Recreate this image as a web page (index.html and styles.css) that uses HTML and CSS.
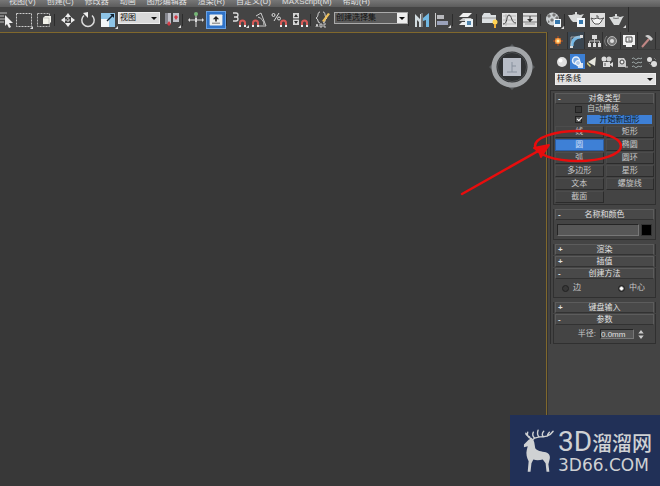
FILE: index.html
```html
<!DOCTYPE html>
<html lang="zh-CN">
<head>
<meta charset="utf-8">
<title>3ds Max</title>
<link rel="stylesheet" href="styles.css">
</head>
<body>
<div class="app">
  <nav class="menubar">
    <a href="#">视图(V)</a><a href="#">创建(C)</a><a href="#">修改器</a><a href="#">动画</a><a href="#">图形编辑器</a><a href="#">渲染(R)</a><a href="#">自定义(U)</a><a href="#">MAXScript(M)</a><a href="#">帮助(H)</a>
  </nav>

  <header class="toolbar">
    <button class="tool tool-first" aria-label="按名称选择"><svg viewBox="0 0 20 20"><path d="M5 3h8M5 6h5M5 9h6M5 12h5" stroke="#bbb"/><path d="M11 5v11l2-2 2 4 2-1-2-4h4z" fill="#eee"/></svg></button>
    <button class="tool" aria-label="矩形选择区域"><svg viewBox="0 0 20 20"><rect x="2.500" y="3.500" width="15" height="13" fill="none" stroke="#ccc" stroke-dasharray="2 1"/><path d="M19 16v3h-3z" fill="#ddd"/></svg></button>
    <button class="tool" aria-label="窗口/交叉"><svg viewBox="0 0 20 20"><rect x="3.500" y="3.500" width="12" height="13" fill="none" stroke="#bbb" stroke-dasharray="2 1"/><path d="M9 8l2-2h6v6l-2 2H9z" fill="#f2f2ea"/><path d="M15 14V8H9" stroke="#aaa" fill="none" stroke-width=".6"/></svg></button>
    <span class="sep"></span>
    <button class="tool" aria-label="选择并移动"><svg viewBox="0 0 20 20"><path d="M10 3l3 4H7zM10 17l3-4H7zM3 10l4-3v6zM17 10l-4-3v6z" fill="#eee"/><path d="M10 7v6M7 10h6" stroke="#ddd" stroke-dasharray="2 1"/></svg></button>
    <button class="tool" aria-label="选择并旋转"><svg viewBox="0 0 20 20"><path d="M6 5.500a6.200 6.200 0 1 0 8 0" fill="none" stroke="#ddd" stroke-width="1.500"/><path d="M5 3l5-1v6z" fill="#eee"/></svg></button>
    <button class="tool" aria-label="选择并缩放"><svg viewBox="0 0 20 20"><path d="M3 3h14v14H3z" fill="#8ec4e6"/><path d="M3 9h8v8H3z" fill="#f2f6f8"/><path d="M9 11l6-6" stroke="#123" stroke-width="1.500"/><path d="M12 4h4v4z" fill="#123"/><path d="M20 16v3h-3z" fill="#ddd"/></svg></button>
    <label class="drop drop-view"><select aria-label="参考坐标系"><option>视图</option></select></label>
    <button class="tool" aria-label="使用轴点中心"><svg viewBox="0 0 20 20"><path d="M3 3h6v11H3zM11 3h6v9h-6z" fill="#bfc0c8"/><path d="M3 3h3v11H3z" fill="#85868e"/><path d="M5 14l2-3 2 3-2 2zM12 7l2-2 2 2-2 3z" fill="#d43b45"/><path d="M19 15v3h-3z" fill="#ddd"/></svg></button>
    <span class="sep"></span>
    <button class="tool" aria-label="选择并操纵"><svg viewBox="0 0 20 20"><path d="M10 4v13M3 10h14" stroke="#ddd"/><path d="M4 8l-2 2 2 2zM16 8l2 2-2 2zM9 8h2v4H9z" fill="#ddd"/><circle cx="10" cy="4" r="2" fill="#76b877"/></svg></button>
    <button class="tool tool-on" aria-label="键盘快捷键覆盖切换"><svg viewBox="0 0 20 20"><rect x="2" y="3" width="16" height="14" rx="1" fill="#eef0ee"/><path d="M10 5l4 4h-3v3H9V9H6z" fill="#222"/><path d="M5 14h10" stroke="#555"/></svg></button>
    <span class="sep"></span>
    <button class="tool" aria-label="三维捕捉"><svg viewBox="0 0 20 20"><path d="M3 3h3q2 0 2 2t-2 2H4h2q2 0 2 2t-2 2H3" fill="none" stroke="#ddd" stroke-width="1.300"/><path d="M10 17v-4a2.500 2.500 0 0 1 5 0v4" fill="none" stroke="#d75a57" stroke-width="2"/><path d="M9 15h2v2H9zM14 15h2v2h-2z" fill="#eee"/><path d="M19 15v3h-3z" fill="#ddd"/></svg></button>
    <button class="tool" aria-label="角度捕捉"><svg viewBox="0 0 20 20"><path d="M6 6l5-3 5 13H9M8 7q6 2 6 8" fill="none" stroke="#ccc"/><path d="M3 17v-4a2.500 2.500 0 0 1 5 0v4" fill="none" stroke="#d75a57" stroke-width="2"/><path d="M2 15h2v2H2zM7 15h2v2H7z" fill="#eee"/></svg></button>
    <button class="tool" aria-label="百分比捕捉"><svg viewBox="0 0 20 20"><circle cx="3.500" cy="5" r="1.500" fill="none" stroke="#ddd"/><circle cx="9" cy="8.500" r="1.500" fill="none" stroke="#ddd"/><path d="M9 3l-5 8" stroke="#ddd"/><path d="M11 17v-4a2.500 2.500 0 0 1 5 0v4" fill="none" stroke="#d75a57" stroke-width="2"/><path d="M10 15h2v2h-2zM15 15h2v2h-2z" fill="#eee"/></svg></button>
    <button class="tool" aria-label="微调器捕捉"><svg viewBox="0 0 20 20"><rect x="3" y="3" width="6" height="12" fill="#d5d5d5"/><path d="M4 7l2-3 2 3zM4 11l2 3 2-3z" fill="#333"/><path d="M3 9h6" stroke="#333"/><path d="M12 17v-4a2.500 2.500 0 0 1 5 0v4" fill="none" stroke="#d75a57" stroke-width="2"/><path d="M11 15h2v2h-2zM16 15h2v2h-2z" fill="#eee"/></svg></button>
    <span class="sep"></span>
    <button class="tool" aria-label="编辑命名选择集"><svg viewBox="0 0 20 20"><path d="M6 2C3 2 5 7 2 8c3 1 1 5 4 5M9 2c3 0 1 5 4 6-3 1-1 5-4 5" fill="none" stroke="#ddd"/><path d="M8 11l6-8 2 1-6 8z" fill="#eec05c"/><path d="M2 17l1-3 1 3M6 14v3h2v-3zM12 14h-2v3h2" fill="none" stroke="#ccc"/></svg></button>
    <label class="drop drop-set"><select aria-label="命名选择集"><option>创建选择集</option></select></label>
    <span class="sep"></span>
    <button class="tool" aria-label="镜像"><svg viewBox="0 0 20 20"><path d="M3 4l5 5V4h1v13H7v-5l-2-2v7H3z" fill="#d2dce0"/><path d="M17 3l-6 5v3l3-1v7h3z" fill="#72b8e2"/><path d="M10 3v14" stroke="#aaa"/></svg></button>
    <button class="tool" aria-label="对齐"><svg viewBox="0 0 20 20"><path d="M3.500 3v14" stroke="#ccc"/><path d="M5 5h7v4H5z" fill="#b8b9bd"/><path d="M5 11h11v4H5z" fill="#9aa1b9"/><path d="M19 15v3h-3z" fill="#ddd"/></svg></button>
    <span class="sep"></span>
    <button class="tool" aria-label="层管理器"><svg viewBox="0 0 20 20"><path d="M3 7l4-4h9l-4 4z" fill="#f0f0f0"/><path d="M3 11l4-3h9l-4 3z" fill="#ccc"/><path d="M3 15l3-3h10l-4 3z" fill="#eee"/><rect x="9" y="9" width="8" height="8" fill="#e9f1f5"/><path d="M11 11h4v4h-4z" fill="#5286ae"/></svg></button>
    <span class="sep"></span>
    <button class="tool" aria-label="功能区"><svg viewBox="0 0 20 20"><path d="M2 6l2-3h6l1 2h5v8H2z" fill="#dce0e2"/><path d="M2 8h14" stroke="#999"/><circle cx="15" cy="12" r="2.500" fill="#ffd354"/><path d="M14 14h2v4h-2z" fill="#eead35"/></svg></button>
    <button class="tool" aria-label="曲线编辑器"><svg viewBox="0 0 20 20"><rect x="2" y="3" width="15" height="14" fill="#e2e2e2"/><path d="M3 6h13M3 10h13M3 14h13M6 4v12" stroke="#aaa" stroke-width=".7"/><path d="M3 14c5 0 3-9 6-9s2 8 7 8" fill="none" stroke="#444"/></svg></button>
    <button class="tool" aria-label="图解视图"><svg viewBox="0 0 20 20"><rect x="3" y="3" width="14" height="14" fill="#e0e0e0"/><path d="M3 6h14M3 12h14" stroke="#777"/><path d="M10 6v6" stroke="#333"/><path d="M7 9h6l-3 3z" fill="#333"/><path d="M5 14h10" stroke="#999"/></svg></button>
    <span class="sep"></span>
    <button class="tool" aria-label="材质编辑器"><svg viewBox="0 0 20 20"><circle cx="8.500" cy="9" r="6.500" fill="#ccd1d3"/><path d="M5 4l2 2-2 2-2-2zM10 3l2 2-2 2-2-2zM8 8l2 2-2 2-2-2zM13 6l2 2-2 2-2-2zM4 10l2 2-2 1z" fill="#777"/><rect x="10" y="9" width="7" height="8" fill="#f3f7fa"/><path d="M11 10h5v4h-5z" fill="#3678ad"/><path d="M20 16v3h-3z" fill="#ddd"/></svg></button>
    <span class="sep"></span>
    <button class="tool" aria-label="渲染设置"><svg viewBox="0 0 20 20"><path d="M4 5q4-2 8 0l4-1q-2 2-3 5l-2 3H5L3 10 0 5zM7 2h2v3H7z" fill="#d8dada"/><rect x="9" y="8" width="8" height="9" fill="#f3f7fa"/><path d="M11 10h4v4h-4z" fill="#3678ad"/></svg></button>
    <button class="tool" aria-label="渲染帧窗口"><svg viewBox="0 0 20 20"><rect x="2" y="3" width="15" height="14" fill="#dfdfdf"/><path d="M6 9q3-2 6 0l4-1q-2 1-3 4l-2 2H7l-2-2-2-4 3 1M8 6h2v2" fill="#f5f5f5" stroke="#555"/></svg></button>
    <button class="tool" aria-label="渲染产品"><svg viewBox="0 0 20 20"><path d="M4 7q4-2 8 0l4-1q-2 2-3 5l-2 4H6l-2-3-3-5zM7 4h2v3H7z" fill="#d8dada"/><path d="M5 8q3 1 6 0" stroke="#777" fill="none"/><path d="M18 15v3h-3z" fill="#ddd"/></svg></button>
    <span class="sep sep-end"></span>
  </header>

  <main class="work">
    <section class="viewport">
      <svg class="viewcube" viewBox="0 0 46 46">
        <path d="M23 0l3 3h-6zM23 46l3-3h-6zM0 23l3-3v6zM46 23l-3-3v6z" fill="#55585b"/>
        <circle cx="23" cy="23" r="18" fill="#303234" stroke="#a3a6a9" stroke-width="5"/>
        <circle cx="23" cy="23" r="14.500" fill="none" stroke="#4b4e50"/>
        <rect x="14" y="14" width="18" height="18" fill="#b8bdc7"/>
        <path d="M23 18v10M23 22h4M18 28h10" stroke="#87909d" fill="none"/>
      </svg>
    </section>

    <aside class="panel">
      <div class="tabs">
        <button class="tab" aria-label="创建"><svg viewBox="0 0 14 14"><path d="M7 2v10M2 7h10M4 4l6 6M10 4l-6 6" stroke="#b8501f"/><circle cx="7" cy="7" r="3" fill="#ff9c3c"/><circle cx="7" cy="7" r="1.500" fill="#fff0b0"/></svg></button>
        <button class="tab tab-lit" aria-label="修改"><svg viewBox="0 0 14 14"><path d="M3 12C3 6 6 3 12 3" fill="none" stroke="#77b9e6" stroke-width="3"/><path d="M2 13V3h10" fill="none" stroke="#ccc" stroke-width=".7"/><path d="M1 12h3v2H1zM11 1h3v3h-3z" fill="#ddd"/></svg></button>
        <button class="tab" aria-label="层次"><svg viewBox="0 0 14 14"><path d="M5 1h5v4H5zM1 9h3v4H1zM6 9h3v4H6zM11 9h3v4h-3z" fill="#ddd"/><path d="M7.500 5v4M2.500 9V7h10v2" fill="none" stroke="#bbb"/></svg></button>
        <button class="tab" aria-label="运动"><svg viewBox="0 0 14 14"><circle cx="8" cy="7" r="4.500" fill="#777" stroke="#b5b5b5"/><circle cx="8" cy="7" r="2" fill="#ddd"/><path d="M3 2C0 5 0 9 3 12" fill="none" stroke="#888"/></svg></button>
        <button class="tab" aria-label="显示"><svg viewBox="0 0 14 14"><path d="M1 1h12v10H1zM4 11h6v2H4z" fill="#f2f2f2"/><path d="M4 3h6v5H4z" fill="none" stroke="#444"/><path d="M7 4v3h3" fill="none" stroke="#777"/></svg></button>
        <button class="tab" aria-label="实用程序"><svg viewBox="0 0 14 14"><path d="M2 13l7-8" stroke="#c08684" stroke-width="2"/><path d="M5 2c3-2 5-1 8 3l-2 2-3-3z" fill="#ccc"/></svg></button>
      </div>
      <div class="kinds">
        <button class="kind" aria-label="几何体"><svg viewBox="0 0 14 14"><circle cx="7" cy="7" r="5" fill="#e0e0e0"/><circle cx="5.500" cy="5.500" r="2" fill="#fff"/></svg></button>
        <button class="kind kind-on" aria-label="图形"><svg viewBox="0 0 14 14"><circle cx="6" cy="5.500" r="3.500" fill="#78a8e2" stroke="#e6effa" stroke-width="1.500"/><path d="M7 8h6v5H8z" fill="#d8e5f4"/><circle cx="8" cy="8" r="2.500" fill="#b4cdec" stroke="#fff"/></svg></button>
        <button class="kind" aria-label="灯光"><svg viewBox="0 0 14 14"><path d="M3 7l8-5-1 9z" fill="#e8e8e0"/><path d="M2 7l4 4-1 1-3-3z" fill="#d8d388"/></svg></button>
        <button class="kind" aria-label="摄影机"><svg viewBox="0 0 14 14"><circle cx="4" cy="4" r="2.500" fill="#ddd"/><circle cx="9" cy="4" r="2.500" fill="#ccc"/><path d="M3 7h7v5H3zM10 9l3-2v5l-3-2z" fill="#ddd"/><path d="M5 8v3" stroke="#555"/></svg></button>
        <button class="kind" aria-label="辅助对象"><svg viewBox="0 0 14 14"><path d="M3 3h6l2 3v6H3z" fill="#ccc"/><circle cx="7" cy="7" r="2" fill="#eee" stroke="#444"/><path d="M10 12h3" stroke="#ccc"/></svg></button>
        <button class="kind" aria-label="空间扭曲"><svg viewBox="0 0 14 14"><path d="M2 4c2-3 3 2 5 0s3 1 5-1M2 8c2-3 3 2 5 0s3 1 5-1M2 12c2-3 3 2 5 0s3 1 5-1" fill="none" stroke="#a9b4b4"/></svg></button>
        <button class="kind" aria-label="系统"><svg viewBox="0 0 14 14"><circle cx="4.500" cy="4.500" r="2.500" fill="#ddd"/><circle cx="9" cy="9" r="3" fill="#ddd"/><path d="M4 8l3 3M9 3l2 2" stroke="#777"/></svg></button>
      </div>
      <label class="drop drop-cat"><select aria-label="图形类别"><option>样条线</option></select></label>

      <div class="rollouts">
        <section class="rollout">
          <button class="head"><i>-</i>对象类型</button>
          <div class="body">
            <label class="tick"><input type="checkbox"><span>自动栅格</span></label>
            <label class="tick"><input type="checkbox" checked><span class="start">开始新图形</span></label>
            <div class="types">
              <button>线</button><button>矩形</button>
              <button class="on">圆</button><button>椭圆</button>
              <button>弧</button><button>圆环</button>
              <button>多边形</button><button>星形</button>
              <button>文本</button><button>螺旋线</button>
              <button>截面</button>
            </div>
          </div>
        </section>
        <section class="rollout">
          <button class="head"><i>-</i>名称和颜色</button>
          <div class="body name-row">
            <input class="field" type="text" aria-label="名称"><button class="swatch" aria-label="颜色"></button>
          </div>
        </section>
        <div class="stack">
          <section class="rollout closed"><button class="head"><i>+</i>渲染</button></section>
          <section class="rollout closed"><button class="head"><i>+</i>插值</button></section>
          <section class="rollout">
            <button class="head"><i>-</i>创建方法</button>
            <div class="body radios">
              <label><input type="radio" name="method">边</label>
              <label><input type="radio" name="method" checked>中心</label>
            </div>
          </section>
        </div>
        <div class="stack">
          <section class="rollout closed"><button class="head"><i>+</i>键盘输入</button></section>
          <section class="rollout">
            <button class="head"><i>-</i>参数</button>
            <div class="body params">
              <label for="radius">半径:</label><input id="radius" class="field" type="text" value="0.0mm">
              <svg class="spin" viewBox="0 0 8 10"><path d="M4 0l3 4H1zM4 10l3-4H1z" fill="#ccc"/></svg>
            </div>
          </section>
        </div>
      </div>
    </aside>
  </main>

  <svg class="callout" viewBox="0 0 162 68">
    <ellipse cx="118" cy="18" rx="43" ry="15" fill="none" stroke="#e80d0d" stroke-width="2.500"/>
    <path d="M2 66L80 22" stroke="#e80d0d" stroke-width="2.500" stroke-linecap="round"/>
    <path d="M89 17L74 20l5 3 2 6z" fill="#e80d0d" stroke="#e80d0d" stroke-width="2" stroke-linejoin="round"/>
  </svg>

  <div class="brand">
    <svg class="deer" viewBox="0 0 34 46">
      <path d="M1 16l5-5 2-1 3 1 1 3 1 6c3 4 9 3 13 5 3 2 3 5 2 8l-1 4 1 8h-3l-1-9-3-4c-4 1-7 1-10 0l-2 4-1 9H5l1-11c-2-4-3-8-2-12l1-4-4 1z" fill="#cfd1d3"/>
      <path d="M10 11c3-3 5-2 8-3 5 0 10 0 14-6M17 8c-2-2-2-4-1-7M22 8c-2-1-2-4 0-6M26 7c0-2 1-3 2-4M9 10C5 9 4 6 5 3M7 8C4 7 3 6 3 4M12 9c-2-2-2-4-1-6" fill="none" stroke="#cfd1d3" stroke-width="1.500" stroke-linecap="round"/>
    </svg>
    <div class="words">
      <div class="brand-name"><span>3D</span>溜溜网</div>
      <div class="brand-url">3D66.COM</div>
    </div>
  </div>
</div>
</body>
</html>
```
FILE: styles.css
```css
* { box-sizing: border-box; }
body {
  margin: 0;
  background: #444;
  color: #c8c8c8;
  font: 8px/10px "Liberation Sans", "Noto Sans CJK SC", sans-serif;
}
button, select, input { font: inherit; color: inherit; margin: 0; padding: 0; border: 0; border-radius: 0; }
button { background: none; }
svg { display: block; }

.app {
  position: relative;
  min-height: 100vh;
  display: flex;
  flex-direction: column;
  overflow: hidden;
}

.menubar {
  height: 7px;
  display: flex;
  align-items: flex-end;
  gap: 11px;
  padding-left: 9px;
  overflow: hidden;
  background: linear-gradient(#777, #5c5c5c);
}
.menubar a { color: #e0e0e0; text-decoration: none; white-space: nowrap; }

.toolbar { height: 25px; display: flex; align-items: center; background: #444; }
.tool { width: 20px; height: 20px; flex: none; }
.tool svg { width: 20px; height: 20px; }
.tool-first { width: 14px; display: flex; justify-content: flex-end; overflow: hidden; }
.tool-first svg { flex: none; }
.tool-on { background: #2f73c8; border: 1px solid #6ba3e4; height: 18px; }
.tool-on svg { width: 18px; height: 16px; }
.sep { width: 4px; height: 12px; flex: none; border-left: 1px solid #2c2c2c; }
.sep-end { height: 25px; }

.drop { position: relative; display: block; flex: none; }
.drop select {
  display: block;
  width: 100%;
  height: 12px;
  padding-left: 1px;
  appearance: none;
  color: #111;
  background: #d9d9d9;
  border: 1px solid #eee;
  line-height: 10px;
}
.drop::after {
  content: "";
  position: absolute;
  right: 3px;
  top: 5px;
  border: 3px solid transparent;
  border-top-color: #111;
  border-bottom: 0;
}
.drop-view, .drop-set { margin-bottom: 4px; }
.drop-view { width: 42px; margin-right: 2px; }
.drop-set { width: 74px; }
.drop-set select { background: linear-gradient(90deg, #5c5c5c 62px, #eee 62px); border-color: #aaa; }
.drop-cat { margin: 4px 4px 0 5px; }
.drop-cat select { background: #e2e2e2; }

.work { flex: 1; display: flex; }
.viewport {
  flex: 1;
  display: flex;
  justify-content: flex-end;
  align-items: flex-start;
  padding: 11px 11px 0 0;
  background: #383838;
  border-top: 1px solid #80682c;
  border-right: 1px solid #80682c;
}
.viewcube { width: 46px; height: 46px; }

.panel { width: 113px; padding-left: 2px; border-left: 1px solid #333; }
.tabs { display: flex; justify-content: space-between; padding: 0 4px 0 0; border-bottom: 1px solid #3a3a3a; }
.tab { width: 18px; height: 17px; display: grid; place-items: center; border-right: 1px solid #303030; }
.tab svg { width: 14px; height: 14px; }
.tab-lit { background: #3b4650; }
.kinds { display: flex; justify-content: space-between; padding: 4px 1px 0 5px; }
.kind { width: 15px; height: 15px; display: grid; place-items: center; }
.kind svg { width: 14px; height: 14px; }
.kind-on { background: #3c7fd4; }

.rollouts {
  display: flex;
  flex-direction: column;
  gap: 4px;
  margin-top: 5px;
  padding: 2px 4px 0 2px;
  border-top: 1px solid #2e2e2e;
  border-left: 1px solid #2e2e2e;
}
.stack { display: flex; flex-direction: column; gap: 1px; }
.rollout {
  border: 1px solid #303030;
  border-top: 0;
  background: #444;
}
.closed { border-bottom: 0; }
.head {
  display: block;
  position: relative;
  width: calc(100% - 2px);
  height: 11px;
  margin: 0 1px;
  text-align: center;
  line-height: 9px;
  color: #e2e2e2;
  background: #494949;
  border: 1px solid #5c5c5c;
  border-bottom-color: #323232;
}
.head i { position: absolute; left: 2px; font-style: normal; font-weight: bold; }
.body { padding: 0 1px; }

.tick { display: flex; align-items: center; gap: 5px; height: 10px; padding: 0 2px 0 20px; }
.tick + .tick { height: 11px; }
.tick input, .radios input { appearance: none; width: 7px; height: 7px; flex: none; background: #383838; border: 1px solid #222; }
.tick input:checked { background: #555; position: relative; }
.tick input:checked::after {
  content: "";
  position: absolute;
  left: 1px;
  top: 0;
  width: 4px;
  height: 2px;
  border: solid #fff;
  border-width: 0 0 1px 1px;
  transform: rotate(-45deg);
}
.start { flex: 1; height: 9px; line-height: 9px; text-align: center; color: #101820; background: #3e80d6; }
.types {
  display: grid;
  grid-template-columns: 1fr 1fr;
  grid-auto-rows: 12px;
  gap: 1px 2px;
  padding: 1px 0;
}
.types button { line-height: 10px; border: 1px solid #4c4c4c; border-right-color: #2b2b2b; border-bottom-color: #2b2b2b; }
.types .on { background: #3e80d6; color: #c7dcf6; border-color: #2c5ea5; }

.field { min-width: 0; background: #575757; border: 1px solid #252525; border-right-color: #777; border-bottom-color: #777; }
.name-row { display: flex; gap: 2px; padding: 4px 3px 3px; }
.name-row .field { flex: 1; height: 12px; }
.swatch { width: 11px; height: 12px; background: #000; border: 1px solid #333; }

.radios { display: flex; justify-content: space-between; height: 18px; padding: 0 10px 0 8px; }
.radios label { display: flex; align-items: center; gap: 4px; }
.radios input { border-radius: 50%; }
.radios input:checked { background: radial-gradient(#fff 1px, #222 3px); }

.params { display: flex; justify-content: flex-end; align-items: center; gap: 4px; height: 18px; padding-right: 10px; }
.params .field { width: 34px; height: 10px; color: #e0e0e0; line-height: 8px; }
.spin { width: 8px; height: 9px; margin-left: -1px; }

.callout { position: absolute; right: 38px; top: 128px; width: 162px; height: 68px; pointer-events: none; }

.brand {
  position: absolute;
  right: 0;
  bottom: 0;
  display: flex;
  gap: 3px;
  padding: 13px 7px 10px 13px;
  width: 150px;
  height: 71px;
  color: #cfd1d3;
  background: #213057;
}
.deer { width: 32px; height: 46px; flex: none; }
.words { white-space: nowrap; }
.brand-name { display: flex; align-items: baseline; height: 28px; font: 500 20px/28px "Noto Sans CJK SC", sans-serif; }
.brand-name span { font: 28px/28px Roboto, sans-serif; }
.brand-url { font: 17px/18px "DejaVu Sans", sans-serif; }
```
